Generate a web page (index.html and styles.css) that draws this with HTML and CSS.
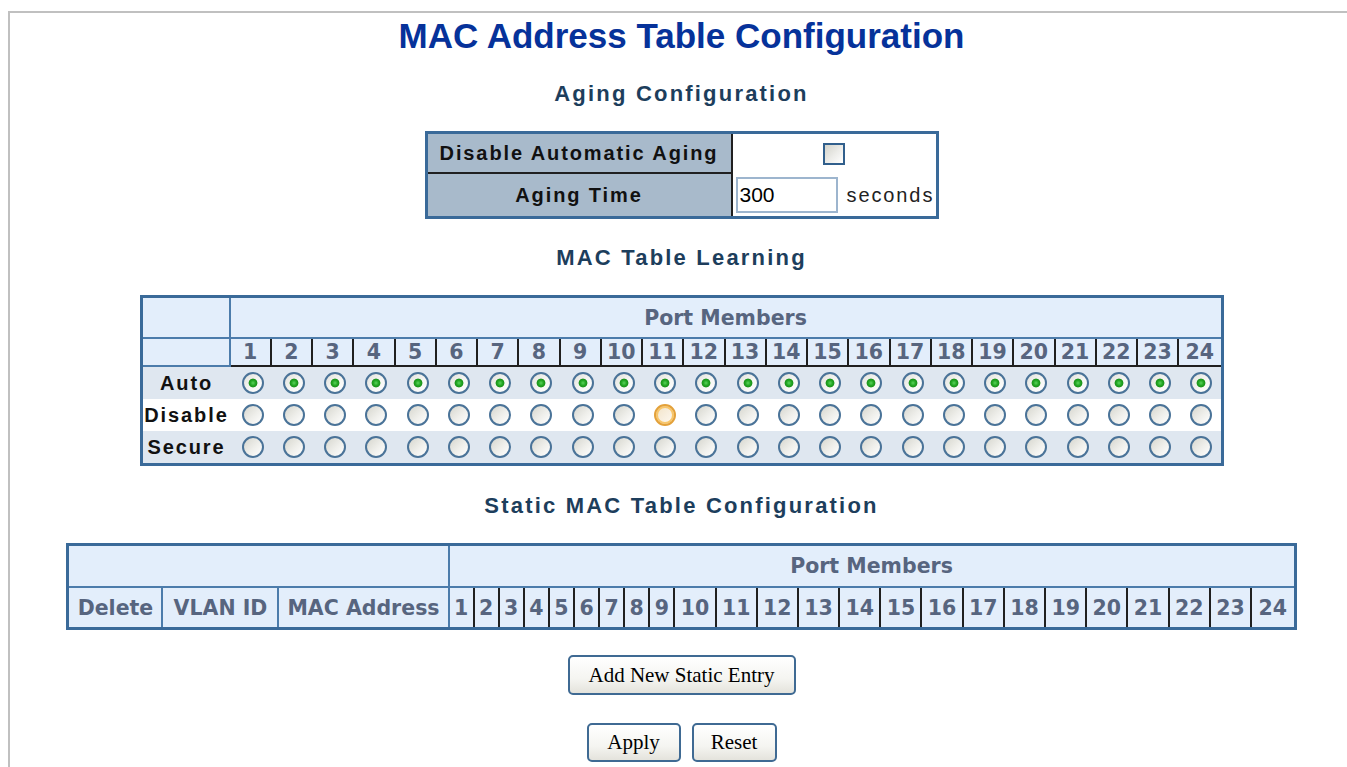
FILE: index.html
```html
<!DOCTYPE html>
<html lang="en">
<head>
    <meta charset="UTF-8">
    <meta name="viewport" content="width=device-width, initial-scale=1.0">
    <title>MAC Address Table Configuration</title>
    <link rel="stylesheet" href="styles.css">
</head>
<body>
    <div class="frame">
        <h1 class="page-title">MAC Address Table Configuration</h1>

        <h2 class="section-title">Aging Configuration</h2>
        <table class="config aging">
            <colgroup>
                <col class="aging-label">
                <col class="aging-value">
            </colgroup>
            <tr class="aging-row1">
                <th class="param first">Disable Automatic Aging</th>
                <td class="value center"><input type="checkbox" class="xp-check"></td>
            </tr>
            <tr class="aging-row2">
                <th class="param">Aging Time</th>
                <td class="value"><input type="text" class="xp-text" value="300"><span class="unit">seconds</span></td>
            </tr>
        </table>

        <h2 class="section-title">MAC Table Learning</h2>
        <table class="config learning">
            <colgroup>
                <col class="learn-label">
            </colgroup>
            <tr class="hdr-row1">
                <th class="hdr blank"></th>
                <th class="hdr members" colspan="24">Port Members</th>
            </tr>
            <tr class="hdr-row2" id="learnPorts">
                <th class="hdr blank"></th>
            </tr>
            <tr class="data odd" id="row-auto">
                <td class="mode">Auto</td>
            </tr>
            <tr class="data" id="row-disable">
                <td class="mode">Disable</td>
            </tr>
            <tr class="data odd" id="row-secure">
                <td class="mode">Secure</td>
            </tr>
        </table>

        <h2 class="section-title">Static MAC Table Configuration</h2>
        <table class="config static">
            <colgroup>
                <col class="c-del">
                <col class="c-vid">
                <col class="c-mac">
                <col class="c-one" span="9">
                <col class="c-two" span="15">
            </colgroup>
            <tr class="st-row1">
                <th class="hdr blank" colspan="3"></th>
                <th class="hdr members" colspan="24">Port Members</th>
            </tr>
            <tr class="st-row2" id="staticPorts">
                <th class="hdr sep">Delete</th>
                <th class="hdr sep">VLAN ID</th>
                <th class="hdr sep">MAC Address</th>
            </tr>
        </table>

        <div class="button-row add-row">
            <button type="button" class="xp-button add">Add New Static Entry</button>
        </div>
        <div class="button-row submit-row">
            <button type="button" class="xp-button apply">Apply</button>
            <button type="button" class="xp-button reset">Reset</button>
        </div>
    </div>

    <script>
        const PORTS = 24;
        const learnHead = document.getElementById('learnPorts');
        const staticHead = document.getElementById('staticPorts');

        // Port number headers for both tables
        for (let p = 1; p <= PORTS; p++) {
            const th = document.createElement('th');
            th.className = 'hdr port-num';
            th.textContent = p;
            learnHead.appendChild(th);
            staticHead.appendChild(th.cloneNode(true));
        }

        // One radio per port for each learning mode
        ['auto', 'disable', 'secure'].forEach(mode => {
            const row = document.getElementById('row-' + mode);
            for (let p = 1; p <= PORTS; p++) {
                const td = document.createElement('td');
                td.className = 'radio-cell';
                const radio = document.createElement('input');
                radio.type = 'radio';
                radio.name = 'learn_' + p;
                radio.value = mode;
                radio.className = 'xp-radio';
                if (mode === 'auto') radio.checked = true;
                if (mode === 'disable' && p === 11) radio.classList.add('hot');
                td.appendChild(radio);
                row.appendChild(td);
            }
        });
    </script>
</body>
</html>
```

FILE: styles.css
```css
html, body {
    overflow: hidden;
}
body {
    margin: 0;
    background-color: white;
    font-family: "Liberation Sans", Arial, sans-serif;
}
.frame {
    margin: 11px 0 0 8px;
    width: 1343px;
    height: 751px;
    padding-top: 3px;
    border: 2px solid #c0c0c0;
    border-bottom: none;
}
.page-title {
    margin: 0;
    font: bold 35px/39px "Liberation Sans", Arial, sans-serif;
    color: #06329a;
    text-align: center;
}
.section-title {
    margin: 24px 0 22px;
    font: bold 22px/30px "Liberation Sans", Arial, sans-serif;
    letter-spacing: 2.2px;
    color: #1d3e5c;
    text-align: center;
}

/* tables */
.config {
    margin: 0 auto;
    border-collapse: separate;
    border-spacing: 0;
    table-layout: fixed;
    border: 3px solid #3a6a99;
}
.config th, .config td {
    padding: 0;
}

/* aging */
.aging {
    width: 514px;
}
.aging-label {
    width: 305px;
}
.aging-value {
    width: 203px;
}
.aging-row1 {
    height: 40px;
}
.aging-row2 {
    height: 42px;
}
.param {
    background-color: #a8bacb;
    border-right: 2px solid #202020;
    font: bold 20px "Liberation Sans", Arial, sans-serif;
    letter-spacing: 1.9px;
    color: #111;
    text-align: center;
    vertical-align: middle;
}
.param.first {
    border-bottom: 2px solid #202020;
}
.value {
    background-color: white;
    padding: 0 3px !important;
    vertical-align: middle;
    white-space: nowrap;
}
.xp-check {
    -webkit-appearance: none;
    appearance: none;
    display: block;
    width: 22px;
    height: 22px;
    margin: 0 auto;
    border: 2px solid #315f8c;
    background: linear-gradient(135deg, #d3d3cb 0%, #ededea 55%, #ffffff 100%);
}
.xp-text {
    box-sizing: border-box;
    width: 102px;
    height: 36px;
    padding: 0 2px;
    border: 2px solid #9db5ce;
    font: 21px "Liberation Sans", Arial, sans-serif;
    color: #000;
    vertical-align: middle;
}
.unit {
    margin-left: 9px;
    font-size: 20px;
    letter-spacing: 1.9px;
    color: #222;
    vertical-align: middle;
}

/* header cells shared by learning and static tables */
.hdr {
    background-color: #e3eefb;
    font: bold 20.5px "DejaVu Sans", Verdana, sans-serif;
    color: #57657f;
    text-align: center;
    vertical-align: middle;
    white-space: nowrap;
}
.members {
    border-bottom: 2px solid #4c7cab;
}
.port-num {
    border-right: 2px solid #202020;
}
.port-num:last-child {
    border-right: none;
}

/* learning */
.learning {
    width: 1084px;
    margin-bottom: 25px;
}
.learn-label {
    width: 88px;
}
.learning .blank {
    border-right: 2px solid #4c7cab;
    border-bottom: 2px solid #4c7cab;
}
.learning .port-num {
    border-bottom: 2px solid #202020;
}
.hdr-row1 {
    height: 41px;
}
.hdr-row2 {
    height: 28px;
}
.data {
    height: 32px;
    background-color: white;
}
.data.odd {
    background-color: #dfe7f0;
}
.mode {
    font: bold 20px "Liberation Sans", Arial, sans-serif;
    letter-spacing: 1.9px;
    color: #111;
    text-align: center;
    vertical-align: middle;
}
.radio-cell {
    padding-left: 3px !important;
    vertical-align: middle;
}
.xp-radio {
    -webkit-appearance: none;
    appearance: none;
    display: block;
    width: 22px;
    height: 22px;
    margin: 0 auto;
    border: 2px solid #4a7398;
    border-radius: 50%;
    background: linear-gradient(135deg, #d6d6ce 0%, #efefeb 55%, #ffffff 100%);
}
.xp-radio:checked {
    background:
        radial-gradient(circle, #5ad35a 0, #25a825 2.5px, #1c931c 4px, rgba(255, 255, 255, 0) 4.8px),
        linear-gradient(135deg, #e2e2dc 0%, #f6f6f3 55%, #ffffff 100%);
}
.xp-radio.hot {
    border-color: #e3a13a;
    box-shadow: inset 0 0 0 2px #f8c66a;
    background: linear-gradient(135deg, #f2e3c6 0%, #f8efe0 55%, #fffaf0 100%);
}

/* static */
.static {
    width: 1230px;
}
.c-del {
    width: 94px;
}
.c-vid {
    width: 116px;
}
.c-mac {
    width: 170px;
}
.c-one {
    width: 25.1px;
}
.c-two {
    width: 41.2px;
}
.st-row1 {
    height: 42px;
}
.st-row2 {
    height: 39px;
}
.static .blank {
    border-right: 2px solid #4c7cab;
    border-bottom: 2px solid #4c7cab;
}
.sep {
    border-right: 2px solid #4c7cab;
}

/* buttons */
.button-row {
    display: flex;
    justify-content: center;
    gap: 11px;
}
.add-row {
    margin-top: 25px;
}
.submit-row {
    margin-top: 28px;
}
.xp-button {
    box-sizing: border-box;
    height: 40px;
    padding: 0;
    border: 2px solid #3f6a93;
    border-radius: 5px;
    background: linear-gradient(#ffffff 0%, #f5f5f1 60%, #e4e3dc 100%);
    font: 21px "Liberation Serif", "Times New Roman", serif;
    color: #000;
}
.xp-button.add {
    width: 228px;
}
.xp-button.apply {
    width: 94px;
    height: 39px;
}
.xp-button.reset {
    width: 85px;
    height: 39px;
}
```
